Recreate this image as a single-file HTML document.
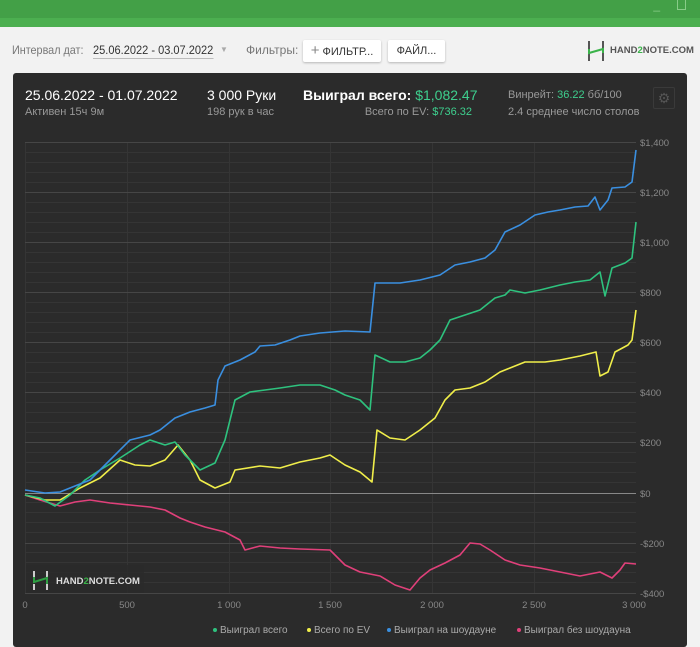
<!DOCTYPE html><html><head><meta charset="utf-8"><style>
body{margin:0;width:700px;height:647px;overflow:hidden;background:#f2f2f2;font-family:"Liberation Sans",sans-serif;position:relative}
.t1{position:absolute;left:0;top:0;width:700px;height:18px;background:#43a047}
.t2{position:absolute;left:0;top:18px;width:700px;height:9px;background:#4caf50}
.abs{position:absolute;white-space:nowrap}
.btn{position:absolute;background:#fff;border-radius:2px;box-shadow:0 1px 2px rgba(0,0,0,.25);font-size:11px;color:#333;text-align:center;line-height:22px;height:22px}
.card{position:absolute;left:13px;top:73px;width:674px;height:574px;background:#2b2b2b;border-radius:3px}
</style></head><body>
<div class="t1"></div><div class="t2"></div>
<div class="abs" style="right:40px;top:-2px;color:#8c8;font-size:12px">_</div>
<div class="abs" style="right:14px;top:0;width:7px;height:9px;border:1px solid #8c8;border-top:none"></div>
<div class="abs" style="left:12px;top:43px;font-size:12px;color:#777;transform:scaleX(.9);transform-origin:left">Интервал дат:</div>
<div class="abs" style="left:93px;top:43px;font-size:12px;color:#333;border-bottom:1px solid #bbb;padding-bottom:1px;transform:scaleX(.92);transform-origin:left">25.06.2022 - 03.07.2022</div>
<div class="abs" style="left:220px;top:45px;font-size:8px;color:#aaa">▼</div>
<div class="abs" style="left:246px;top:43px;font-size:12px;color:#777">Фильтры:</div>
<div class="btn" style="left:303px;top:40px;width:78px"><span style="color:#888;font-size:15px">+</span> ФИЛЬТР...</div>
<div class="btn" style="left:388px;top:40px;width:57px">ФАЙЛ...</div>
<svg class="abs" style="left:586px;top:40px" width="20" height="22"><path d="M3 1v8M3 13v8M17 1v8M17 13v8" stroke="#555" stroke-width="2"/><path d="M3 9v4L17 9v4" stroke="#3bb34a" stroke-width="2" fill="none"/></svg>
<div class="abs" style="left:610px;top:45px;font-size:9.5px;color:#555;font-weight:bold">HAND<span style="color:#3bb34a">2</span>NOTE.COM</div>
<div class="card"></div>
<div class="abs" style="left:25px;top:87px;font-size:14px;color:#fff">25.06.2022 - 01.07.2022</div>
<div class="abs" style="left:25px;top:106px;font-size:11px;color:#999">Активен 15ч 9м</div>
<div class="abs" style="left:207px;top:87px;font-size:14px;color:#fff">3 000 Руки</div>
<div class="abs" style="left:207px;top:106px;font-size:11px;color:#999">198 рук в час</div>
<div class="abs" style="left:303px;top:87px;font-size:14px;color:#fff;font-weight:bold">Выиграл всего: <span style="color:#3ecf8e;font-weight:normal">$1,082.47</span></div>
<div class="abs" style="right:228px;top:106px;font-size:11px;color:#999">Всего по EV: <span style="color:#3ecf8e">$736.32</span></div>
<div class="abs" style="left:508px;top:89px;font-size:11px;color:#999">Винрейт: <span style="color:#3ecf8e">36.22</span> бб/100</div>
<div class="abs" style="left:508px;top:106px;font-size:11px;color:#999">2.4 среднее число столов</div>
<div class="abs" style="left:653px;top:87px;width:20px;height:20px;border:1px solid #3a3a3a;border-radius:2px;color:#555;font-size:14px;text-align:center;line-height:20px">⚙</div>
<svg class="abs" style="left:0;top:0" width="700" height="647">
<g stroke="#353535" stroke-width="1">
<path d="M25 152.5H636M25 162.5H636M25 172.5H636M25 182.5H636M25 202.5H636M25 212.5H636M25 222.5H636M25 232.5H636M25 252.5H636M25 262.5H636M25 272.5H636M25 282.5H636M25 302.5H636M25 312.5H636M25 322.5H636M25 332.5H636M25 352.5H636M25 362.5H636M25 372.5H636M25 382.5H636M25 402.5H636M25 412.5H636M25 422.5H636M25 432.5H636M25 452.5H636M25 462.5H636M25 472.5H636M25 482.5H636M25 502.5H636M25 512.5H636M25 522.5H636M25 532.5H636M25 552.5H636M25 562.5H636M25 572.5H636M25 582.5H636"/>
<path d="M25.5 142V594M127.5 142V594M229.5 142V594M330.5 142V594M432.5 142V594M534.5 142V594"/>
</g>
<g stroke="#464646"><path d="M25 142.5H636M25 192.5H636M25 242.5H636M25 292.5H636M25 342.5H636M25 392.5H636M25 442.5H636M25 543.5H636M25 593.5H636"/></g>
<path d="M25 493.5H636" stroke="#888"/>
<g fill="none" stroke-width="1.6" stroke-linejoin="round">
<polyline stroke="#e0407a" points="25,495 40,500 60,506 75,502 90,500 110,503 130,505 150,507 165,510 180,518 190,522 205,527 225,532 240,540 245,550 260,546 280,548 300,549 330,550 345,565 360,572 380,576 395,585 410,590 420,578 430,570 445,563 460,555 470,543 480,544 490,550 505,560 520,565 540,568 560,572 580,576 600,572 612,578 620,570 625,563 636,564"/>
<polyline stroke="#f0ee4a" points="25,495 45,500 60,500 80,488 100,478 120,460 135,465 150,466 165,460 178,445 190,460 200,480 215,488 230,482 235,470 260,466 280,468 300,462 320,458 330,455 345,465 360,472 372,482 377,430 390,438 405,440 420,430 435,418 445,400 455,390 470,388 485,382 500,372 510,368 525,362 545,362 560,360 580,356 596,352 600,376 608,372 615,352 628,345 632,340 636,310"/>
<polyline stroke="#2ec27e" points="25,495 40,498 55,506 70,495 85,480 100,470 120,458 140,445 150,440 165,445 175,442 185,455 200,470 215,463 225,440 235,400 250,392 265,390 280,388 300,385 320,385 335,390 345,395 360,400 370,410 375,355 390,362 405,362 420,358 430,350 440,340 450,320 465,315 480,310 495,298 505,295 510,290 525,293 540,290 560,285 575,282 590,280 600,272 605,296 612,268 625,263 632,258 636,222"/>
<polyline stroke="#3a8fe0" points="25,490 45,493 60,492 75,486 90,480 100,470 115,455 130,440 150,435 160,430 175,418 190,412 205,408 215,405 218,380 225,366 240,360 255,352 260,346 275,345 290,340 300,336 320,333 345,331 370,332 375,283 400,283 420,280 440,275 455,265 470,262 485,258 495,250 505,232 520,225 535,215 548,212 560,210 575,207 588,206 595,197 600,210 608,200 612,188 625,187 632,182 636,150"/>
</g>
<g font-size="9.5" fill="#888" font-family="Liberation Sans,sans-serif">
<text x="640" y="146">$1,400</text><text x="640" y="196">$1,200</text><text x="640" y="246">$1,000</text><text x="640" y="296">$800</text><text x="640" y="346">$600</text><text x="640" y="396">$400</text><text x="640" y="446">$200</text><text x="640" y="497">$0</text><text x="640" y="547">-$200</text><text x="640" y="597">-$400</text>
<text x="25" y="608" text-anchor="middle">0</text><text x="127" y="608" text-anchor="middle">500</text><text x="229" y="608" text-anchor="middle">1 000</text><text x="330" y="608" text-anchor="middle">1 500</text><text x="432" y="608" text-anchor="middle">2 000</text><text x="534" y="608" text-anchor="middle">2 500</text><text x="634" y="608" text-anchor="middle">3 000</text>
</g>
<rect x="26" y="565" width="118" height="28" fill="#2b2b2b" opacity=".8"/>
<path d="M34 571v6M34 584v6M47 571v6M47 584v6" stroke="#ccc" stroke-width="2"/><path d="M34 577v5L47 578v6" stroke="#2ea043" stroke-width="2" fill="none"/>
<text x="56" y="584" font-size="9.5" font-weight="bold" fill="#ddd" font-family="Liberation Sans,sans-serif">HAND<tspan fill="#3bb34a">2</tspan>NOTE.COM</text>
<g font-size="10" fill="#aaa" font-family="Liberation Sans,sans-serif">
<circle cx="215" cy="630" r="2" fill="#2ec27e"/><text x="220" y="633">Выиграл всего</text>
<circle cx="309" cy="630" r="2" fill="#f0ee4a"/><text x="314" y="633">Всего по EV</text>
<circle cx="389" cy="630" r="2" fill="#3a8fe0"/><text x="394" y="633">Выиграл на шоудауне</text>
<circle cx="519" cy="630" r="2" fill="#e0407a"/><text x="524" y="633">Выиграл без шоудауна</text>
</g>
</svg>
</body></html>
